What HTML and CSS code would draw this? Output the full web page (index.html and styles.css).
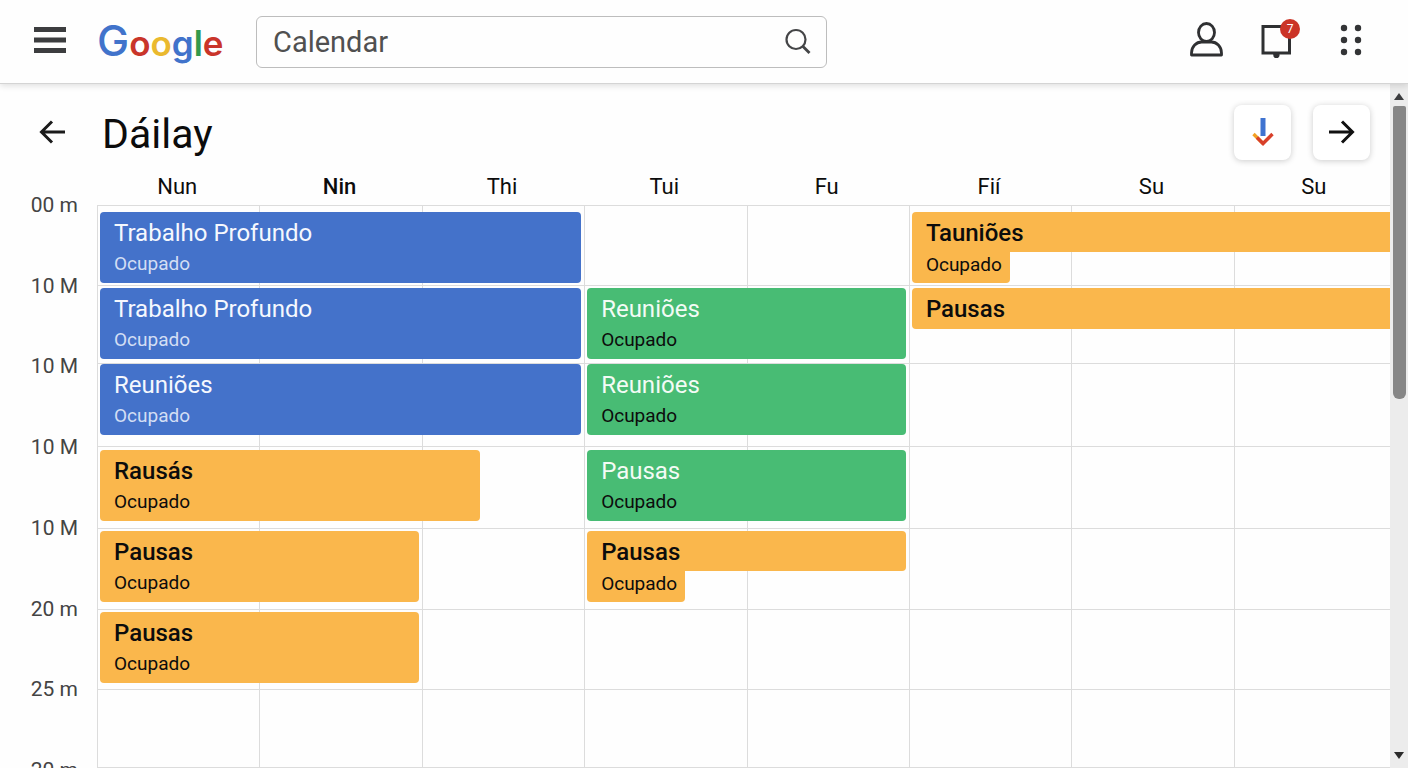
FILE: index.html
```html
<!DOCTYPE html>
<html lang="pt">
<head>
  <meta charset="UTF-8" />
  <meta name="viewport" content="width=device-width, initial-scale=1.0" />
  <title>Calendar</title>
  <link rel="stylesheet" href="styles.css">
</head>
<body>
  <header class="topbar">
    <button type="button" class="icon-btn menu" aria-label="Menu">
      <svg width="32" height="26" viewBox="0 0 32 26" fill="#3c3d3f">
        <rect y="0" width="32" height="5" />
        <rect y="10.500" width="32" height="5" />
        <rect y="21" width="32" height="5" />
      </svg>
    </button>
    <a href="#" class="logo"><span class="blue cap">G</span><span class="red">o</span><span class="yellow">o</span><span class="blue">g</span><span class="green">l</span><span class="red">e</span></a>
    <form class="search">
      <input type="text" aria-label="Search" value="Calendar" />
      <button type="submit" class="icon-btn" aria-label="Search">
        <svg width="28" height="28" viewBox="0 0 28 28" fill="none" stroke="#444547" stroke-width="2.200">
          <circle cx="12" cy="11.500" r="9.500" />
          <path d="M18.500 18 25.500 25" stroke-width="2.800" />
        </svg>
      </button>
    </form>
    <nav class="actions">
      <button type="button" class="icon-btn" aria-label="Account">
        <svg width="34" height="36" viewBox="0 0 34 36" fill="none" stroke="#2f3032" stroke-width="2.800" stroke-linejoin="round">
          <ellipse cx="17.500" cy="10.500" rx="8" ry="9" />
          <path d="M2.500 33V31C2.500 24.500 7.500 20 12.500 20H22.500C27.500 20 32.500 24.500 32.500 31V33Z" />
        </svg>
      </button>
      <button type="button" class="icon-btn bell" aria-label="Notifications">
        <svg width="30" height="36" viewBox="0 0 30 36">
          <path d="M2 4.500H28.500V31H2Z" fill="none" stroke="#2f3032" stroke-width="3" />
          <path d="M12 31H18.500V34Q15.500 39 12.500 34.500Z" fill="#2f3032" />
        </svg>
        <span class="badge">7</span>
      </button>
      <button type="button" class="icon-btn" aria-label="Apps">
        <svg width="22" height="32" viewBox="0 0 22 32" fill="#333436">
          <circle cx="4" cy="4" r="3.200" /><circle cx="18" cy="4" r="3.200" />
          <circle cx="4" cy="16" r="3.200" /><circle cx="18" cy="16" r="3.200" />
          <circle cx="4" cy="28" r="3.200" /><circle cx="18" cy="28" r="3.200" />
        </svg>
      </button>
    </nav>
  </header>

  <div class="page">
    <main class="content">
      <div class="toolbar">
        <button type="button" class="icon-btn" aria-label="Back">
          <svg width="27" height="24" viewBox="0 0 27 24" fill="none" stroke="#1b1b1b" stroke-width="3">
            <path d="M26 12H3M13 1.500 2.500 12 13 22.500" />
          </svg>
        </button>
        <h1>Dáilay</h1>
        <button type="button" class="card-btn" aria-label="Download">
          <svg width="22" height="30" viewBox="0 0 22 30" fill="none">
            <path d="M11 1V19" stroke="#3f73d0" stroke-width="5" />
            <path d="M1.500 17 11 26.500" stroke="#f2a024" stroke-width="3.400" />
            <path d="M5 20.500 11 26.500 20.500 17" stroke="#d8402a" stroke-width="3.400" />
          </svg>
        </button>
        <button type="button" class="card-btn" aria-label="Next">
          <svg width="27" height="24" viewBox="0 0 27 24" fill="none" stroke="#111" stroke-width="3">
            <path d="M1 12H24M14 1.500 24.500 12 14 22.500" />
          </svg>
        </button>
      </div>

      <div class="calendar">
        <div class="days">
          <span>Nun</span>
          <span class="today">Nin</span>
          <span>Thi</span>
          <span>Tui</span>
          <span>Fu</span>
          <span>Fií</span>
          <span>Su</span>
          <span>Su</span>
        </div>
        <div class="hours">
          <span>00 m</span>
          <span>10 M</span>
          <span>10 M</span>
          <span>10 M</span>
          <span>10 M</span>
          <span>20 m</span>
          <span>25 m</span>
          <span>20 m</span>
        </div>
        <div class="board">
          <div class="columns">
            <i></i><i></i><i></i><i></i><i></i><i></i><i></i><i></i>
          </div>
          <div class="rows">
            <i></i><i></i><i></i><i></i><i></i><i></i><i></i>
          </div>
          <div class="events">
            <div class="event work row-1 mon-wed"><b>Trabalho Profundo</b><small>Ocupado</small></div>
            <div class="event work row-2 mon-wed"><b>Trabalho Profundo</b><small>Ocupado</small></div>
            <div class="event work row-3 mon-wed"><b>Reuniões</b><small>Ocupado</small></div>
            <div class="event break row-4 mon-wed short"><b>Rausás</b><small>Ocupado</small></div>
            <div class="event break row-5 mon-tue"><b>Pausas</b><small>Ocupado</small></div>
            <div class="event break row-6 mon-tue"><b>Pausas</b><small>Ocupado</small></div>

            <div class="event meeting row-2 thu-fri"><b>Reuniões</b><small>Ocupado</small></div>
            <div class="event meeting row-3 thu-fri"><b>Reuniões</b><small>Ocupado</small></div>
            <div class="event meeting row-4 thu-fri"><b>Pausas</b><small>Ocupado</small></div>
            <div class="event break row-5 thu-fri stepped"><b>Pausas</b><small>Ocupado</small></div>

            <div class="event break row-1 weekend stepped"><b>Tauniões</b><small>Ocupado</small></div>
            <div class="event break row-2 weekend slim"><b>Pausas</b></div>
          </div>
        </div>
      </div>
    </main>

    <div class="scrollbar" aria-hidden="true">
      <svg width="10" height="7" viewBox="0 0 10 7" fill="#3c3d3f"><path d="M5 0 10 7H0Z" /></svg>
      <div class="thumb"></div>
      <svg width="10" height="7" viewBox="0 0 10 7" fill="#2b2b2b"><path d="M5 7 0 0H10Z" /></svg>
    </div>
  </div>
</body>
</html>
```

FILE: styles.css
```css
* {
  box-sizing: border-box;
}

body {
  margin: 0;
  height: 100vh;
  display: flex;
  flex-direction: column;
  overflow: hidden;
  font-family: Roboto, Arial, sans-serif;
  color: #0c0c0c;
  background: #fefefe;
}

button {
  font: inherit;
  cursor: pointer;
}

svg {
  display: block;
}

.icon-btn {
  border: none;
  background: none;
  padding: 0;
}

/* Top bar */
.topbar {
  flex: none;
  display: flex;
  align-items: center;
  height: 84px;
  padding: 0 46px 0 34px;
  border-bottom: 1px solid #d4d4d4;
  box-shadow: 0 2px 6px rgba(0, 0, 0, 0.12);
  background: #fefefe;
  z-index: 1;
}

.menu {
  margin-right: 31px;
  padding-bottom: 3px;
}

.logo {
  width: 159px;
  font-family: Inter, Roboto, sans-serif;
  font-size: 35px;
  line-height: 48px;
  font-weight: 600;
  text-decoration: none;
}

.cap {
  font-size: 43px;
  font-weight: 500;
}

.blue { color: #4173cb; }
.red { color: #c9352a; }
.yellow { color: #eab92f; }
.green { color: #329a4c; }

.search {
  flex: 0 1 571px;
  display: flex;
  align-items: center;
  height: 52px;
  padding: 0 14px 0 16px;
  border: 1px solid #bdbdbd;
  border-radius: 6px;
}

.search input {
  flex: 1;
  min-width: 0;
  border: none;
  outline: none;
  padding: 0;
  background: none;
  font: 29px/36px Roboto, Arial, sans-serif;
  color: #505050;
}

.actions {
  display: flex;
  align-items: center;
  gap: 38px;
  margin-left: auto;
  padding-bottom: 4px;
}

.actions .icon-btn:last-child {
  margin-left: 11px;
}

.bell {
  position: relative;
}

.badge {
  position: absolute;
  top: -3px;
  right: -9px;
  width: 20px;
  height: 20px;
  border-radius: 50%;
  background: #cb3427;
  color: #fff;
  font-size: 12px;
  line-height: 20px;
}

/* Page */
.page {
  flex: 1;
  min-height: 0;
  display: flex;
}

.content {
  flex: 1;
  min-width: 0;
  overflow: hidden;
}

.toolbar {
  display: flex;
  align-items: center;
  gap: 22px;
  padding: 20px 20px 0 39px;
}

.toolbar h1 {
  flex: 1;
  margin: 0 0 0 14px;
  padding-top: 4px;
  font-size: 41px;
  line-height: 52px;
  font-weight: 400;
}

.card-btn {
  display: flex;
  align-items: center;
  justify-content: center;
  width: 57px;
  height: 55px;
  padding: 0;
  border: none;
  border-radius: 8px;
  background: #fff;
  box-shadow: 0 1px 6px rgba(0, 0, 0, 0.2);
}

/* Calendar */
.calendar {
  display: grid;
  grid-template-columns: 97px 1fr;
  margin-right: -6px;
}

.days {
  grid-column: 2;
  display: grid;
  grid-template-columns: repeat(8, 1fr);
  padding: 13px 0 4px;
  font-size: 22px;
  line-height: 28px;
  text-align: center;
}

.days span {
  padding-right: 2px;
}

.days .today {
  font-weight: 500;
}

.hours {
  display: flex;
  flex-direction: column;
  justify-content: space-between;
  margin: -15px 0 -17px;
  padding-right: 19px;
  font-size: 21px;
  line-height: 30px;
  text-align: right;
  color: #444;
}

.board {
  display: grid;
}

.columns,
.rows,
.events {
  grid-area: 1 / 1;
  display: grid;
}

.columns,
.events {
  grid-template-columns: repeat(8, 1fr);
}

.columns i {
  border-left: 1px solid #dcdcdc;
}

.rows {
  grid-template-rows: 80px 78px 83px 82px 81px 80px 78px;
  border-bottom: 1px solid #dcdcdc;
}

.rows i {
  border-top: 1px solid #dcdcdc;
}

/* Events */
.events {
  grid-template-rows: 76px 76px 86px 81px 81px 81px;
  padding-top: 7px;
}

.event {
  height: 71px;
  margin: 0 3px;
  padding: 6px 14px;
  border-radius: 4px;
}

.event b,
.event small {
  display: block;
}

.event b {
  font-size: 24px;
  line-height: 31px;
  font-weight: 400;
}

.event small {
  font-size: 19px;
  line-height: 30px;
}

.row-1 { grid-row: 1; }
.row-2 { grid-row: 2; }
.row-3 { grid-row: 3; }
.row-4 { grid-row: 4; }
.row-5 { grid-row: 5; }
.row-6 { grid-row: 6; }

.mon-tue { grid-column: 1 / 3; }
.mon-wed { grid-column: 1 / 4; }
.thu-fri { grid-column: 4 / 6; }
.weekend { grid-column: 6 / 9; margin-right: 0; }

.short {
  width: 78%;
}

.work {
  background: #4472ca;
  color: #f5f8fe;
}

.work small {
  color: #d3def4;
}

.meeting {
  background: #48bc74;
}

.meeting b {
  color: #f3fbf5;
}

.break {
  background: #fab74c;
}

.break b {
  font-weight: 500;
}

.slim {
  height: 41px;
}

/* Full-width title with a narrow tab under it */
.stepped {
  padding: 0;
  background: none;
}

.stepped b,
.stepped small {
  padding: 6px 14px 3px;
  background: #fab74c;
  border-radius: 4px 4px 4px 0;
}

.stepped small {
  width: 98px;
  padding: 0 0 5px 14px;
  border-radius: 0 0 4px 4px;
  line-height: 26px;
}

/* Scrollbar */
.scrollbar {
  display: flex;
  flex-direction: column;
  align-items: center;
  width: 18px;
  padding: 9px 0;
  background: #ececec;
  z-index: 0;
}

.thumb {
  width: 13px;
  height: 44%;
  margin: 6px 0 auto;
  border-radius: 2px 2px 6px 6px;
  background: #868686;
}
```
